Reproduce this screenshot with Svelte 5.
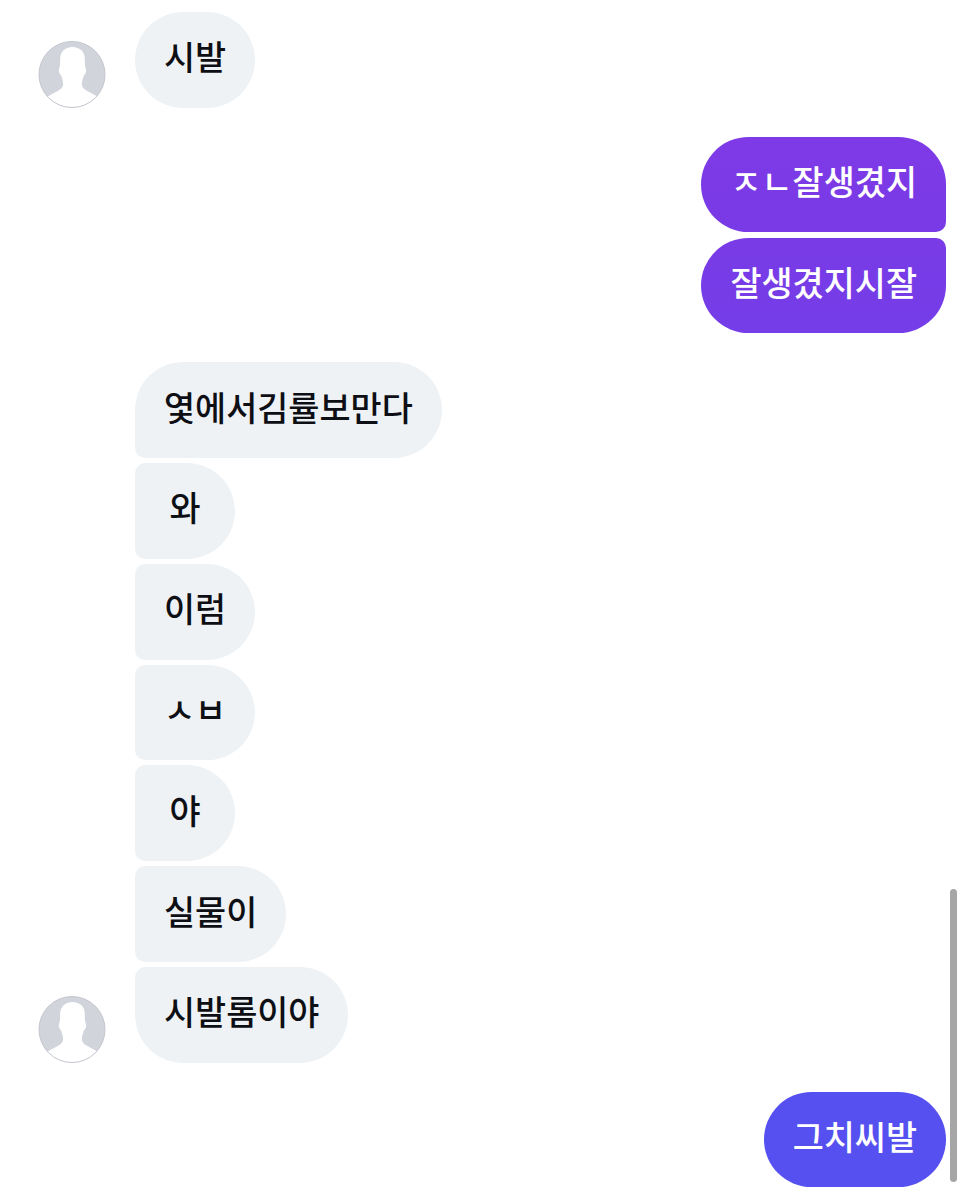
<script>
	const groups = [
		{ side: 'in', messages: ['시발'] },
		{ side: 'out', messages: ['ㅈㄴ잘생겼지', '잘생겼지시잘'] },
		{ side: 'in', messages: ['옃에서김률보만다', '와', '이럼', 'ㅅㅂ', '야', '실물이', '시발롬이야'] },
		{ side: 'out', messages: ['그치씨발'] }
	]

	const corner = (group, i) => {
		const n = group.messages.length
		if (n === 1) return ''
		if (i === 0) return 'first'
		if (i === n - 1) return 'last'
		return 'middle'
	}
</script>

<main class="chat">
	{#each groups as group}
		<section class="group {group.side}">
			{#each group.messages as text, i}
				<div class="row">
					{#if group.side === 'in' && i === group.messages.length - 1}
						<svg class="avatar" viewBox="0 0 68 68" aria-hidden="true">
							<defs>
								<clipPath id="round"><circle cx="34" cy="34" r="33.5" /></clipPath>
							</defs>
							<g clip-path="url(#round)">
								<rect width="68" height="68" fill="#d2d4dc" />
								<path
									d="M34.500 6C27 6 22 11 22 18c0 4 0 7-1 10-1 3 0 5 2 7 1 3 2 6 2 9 0 3-2 5-6 7L6 58v10h57V58L50 51c-4-2-6-4-6-7 0-3 1-6 2-9 2-2 3-4 2-7-1-3-1-6-1-10C47 11 42 6 34.500 6z"
									fill="#fff"
								/>
							</g>
							<circle cx="34" cy="34" r="33.500" fill="none" stroke="#c3c5cd" />
						</svg>
					{/if}
					<div class="bubble {corner(group, i)}">{text}</div>
				</div>
			{/each}
		</section>
	{/each}
	<div class="scrollbar"></div>
</main>

<style>
	:global(body) {
		margin: 0;
		background: #fff;
	}

	.chat {
		position: relative;
		box-sizing: border-box;
		height: 1200px;
		overflow: hidden;
		padding: 12px 19px 0 135px;
		display: flex;
		flex-direction: column;
		gap: 29.2px;
		font-family: 'Noto Sans CJK KR', 'Noto Sans', sans-serif;
		font-size: 33.8px;
		font-weight: 500;
	}

	.group {
		display: flex;
		flex-direction: column;
		gap: 5.2px;
	}

	.out {
		align-items: flex-end;
	}

	.in {
		align-items: flex-start;
	}

	.row {
		position: relative;
		display: flex;
		align-items: flex-end;
	}

	.avatar {
		position: absolute;
		left: -97px;
		bottom: 0;
		width: 68px;
		height: 67px;
	}

	.bubble {
		box-sizing: border-box;
		height: 95.6px;
		min-width: 100px;
		padding: 0 29px 8px;
		border-radius: 48px;
		display: flex;
		align-items: center;
		justify-content: center;
		white-space: nowrap;
	}

	.in .bubble {
		background: #eff2f5;
		color: #0d0f14;
	}

	.out .bubble {
		color: #fff;
		background: linear-gradient(180deg, #8a3ae8 0, #7a3ae6 200px, #5550ef 1060px);
		background-attachment: fixed;
	}

	.in .first {
		border-bottom-left-radius: 10px;
	}

	.in .middle {
		border-top-left-radius: 10px;
		border-bottom-left-radius: 10px;
	}

	.in .last {
		border-top-left-radius: 10px;
	}

	.out .first {
		border-bottom-right-radius: 10px;
	}

	.out .middle {
		border-top-right-radius: 10px;
		border-bottom-right-radius: 10px;
	}

	.out .last {
		border-top-right-radius: 10px;
	}

	.scrollbar {
		position: absolute;
		left: 950px;
		top: 889px;
		width: 7px;
		height: 293px;
		border-radius: 4px;
		background: #a6a6a6;
	}
</style>
